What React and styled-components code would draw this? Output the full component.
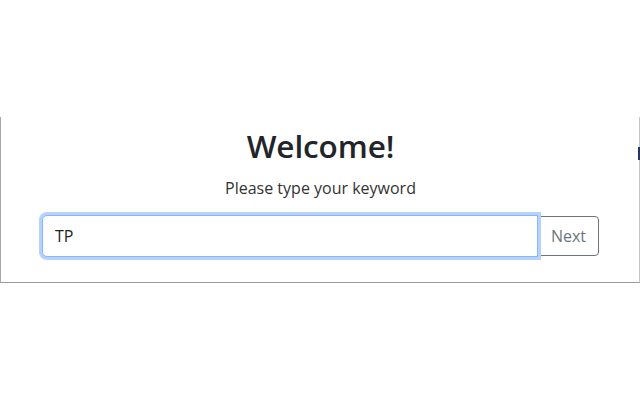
import React, {useState} from 'react';
import styled, {createGlobalStyle} from 'styled-components';

const GlobalStyle = createGlobalStyle`
  html, body {
    margin: 0;
    padding: 0;
    background: #fff;
  }
  body {
    font-family: "Open Sans", "Noto Sans", sans-serif;
    color: #212529;
  }
`;

const Page = styled.div`
  width: 640px;
  height: 400px;
  padding-top: 117px;
  box-sizing: border-box;
`;

const Panel = styled.section`
  position: relative;
  height: 166px;
  box-sizing: border-box;
  border-left: 1px solid #a9a9a9;
  border-right: 1px solid #c4c4c4;
  border-bottom: 1px solid #9a9a9a;
  padding: 10px 40px 0 41px;
  display: flex;
  flex-direction: column;
  align-items: center;

  &::after {
    content: "";
    position: absolute;
    right: -1px;
    top: 30px;
    width: 2px;
    height: 13px;
    background: #2b3564;
  }
`;

const Title = styled.h2`
  margin: 0;
  font-size: 31.5px;
  font-weight: 600;
  line-height: 1.2;
  letter-spacing: -0.1px;
`;

const Subtitle = styled.p`
  margin: 11px 0 0;
  font-size: 16px;
  line-height: 1.5;
  color: #333;
`;

const InputGroup = styled.div`
  margin-top: 15px;
  width: 100%;
  display: flex;
  align-items: stretch;
`;

const KeywordInput = styled.input`
  flex: 1;
  height: 42px;
  box-sizing: border-box;
  padding: 0 12px;
  font-family: inherit;
  font-size: 16px;
  color: #212529;
  border: 1px solid #86b7fe;
  border-radius: 5px 0 0 5px;
  outline: none;
  box-shadow: 0 0 0 3px #b6d1fb;
  position: relative;
  z-index: 1;
  caret-color: #111;
`;

const NextButton = styled.button`
  height: 40px;
  align-self: center;
  margin-left: -1px;
  padding: 0 12px 0 13px;
  font-family: inherit;
  font-size: 16px;
  color: #6c757d;
  background: #fff;
  border: 1px solid #6c757d;
  border-radius: 0 4px 4px 0;
  cursor: pointer;
`;

export default function App() {
  const [keyword, setKeyword] = useState('TP');

  return (
    <Page>
      <GlobalStyle/>
      <Panel>
        <Title>Welcome!</Title>
        <Subtitle>Please type your keyword</Subtitle>
        <InputGroup>
          <KeywordInput
            autoFocus
            value={keyword}
            onChange={e=>setKeyword(e.target.value)}
          />
          <NextButton>Next</NextButton>
        </InputGroup>
      </Panel>
    </Page>
  )
}
